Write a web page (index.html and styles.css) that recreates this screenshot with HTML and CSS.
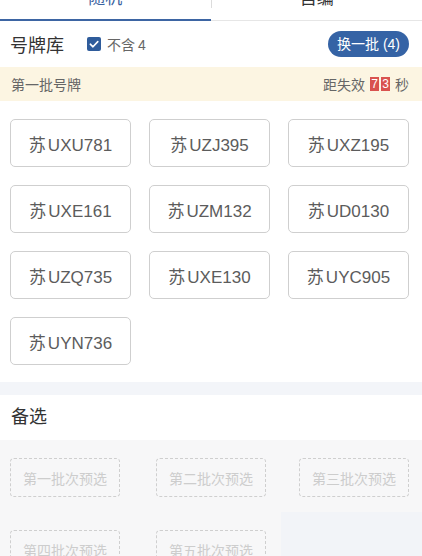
FILE: index.html
```html
<!DOCTYPE html>
<html lang="zh">
<head>
<meta charset="utf-8">
<link rel="stylesheet" href="styles.css">
</head>
<body>
<div class="page">
  <div class="tabs">
    <div class="tab active">随机</div>
    <div class="tab-sep"></div>
    <div class="tab">自编</div>
  </div>

  <div class="head">
    <div class="title">号牌库</div>
    <label class="check">
      <span class="box"><svg viewBox="0 0 14 14" width="14" height="14"><path d="M3.3 7.2 L6 9.8 L10.8 4.6" fill="none" stroke="#fff" stroke-width="1.6" stroke-linecap="round" stroke-linejoin="round"/></svg></span>
      <span class="check-text">不含<span class="num">4</span></span>
    </label>
    <div class="btn">换一批 (4)</div>
  </div>

  <div class="notice">
    <span>第一批号牌</span>
    <span class="timer">距失效<span class="digit">7</span><span class="digit">3</span>秒</span>
  </div>

  <div class="plates">
    <div class="plate"><span><span class="prov">苏</span>UXU781</span></div>
    <div class="plate"><span><span class="prov">苏</span>UZJ395</span></div>
    <div class="plate"><span><span class="prov">苏</span>UXZ195</span></div>
    <div class="plate"><span><span class="prov">苏</span>UXE161</span></div>
    <div class="plate"><span><span class="prov">苏</span>UZM132</span></div>
    <div class="plate"><span><span class="prov">苏</span>UD0130</span></div>
    <div class="plate"><span><span class="prov">苏</span>UZQ735</span></div>
    <div class="plate"><span><span class="prov">苏</span>UXE130</span></div>
    <div class="plate"><span><span class="prov">苏</span>UYC905</span></div>
    <div class="plate"><span><span class="prov">苏</span>UYN736</span></div>
  </div>

  <div class="gap-band"></div>

  <div class="sub-title">备选</div>

  <div class="slots">
    <div class="cell"><div class="slot">第一批次预选</div></div>
    <div class="cell"><div class="slot">第二批次预选</div></div>
    <div class="cell"><div class="slot">第三批次预选</div></div>
    <div class="cell"><div class="slot">第四批次预选</div></div>
    <div class="cell"><div class="slot">第五批次预选</div></div>
    <div class="cell empty"></div>
  </div>
</div>
</body>
</html>
```

FILE: styles.css
```css
* { box-sizing: border-box; }
html, body {
  margin: 0;
  padding: 0;
  background: #fff;
  overflow: hidden;
}
body {
  font-family: "Liberation Sans", "Noto Sans CJK SC", sans-serif;
  color: #333;
}
.page {
  width: 422px;
  height: 556px;
  overflow: hidden;
}

/* tabs */
.tabs {
  display: flex;
  margin-top: -19px;
  height: 40px;
}
.tab {
  flex: 1;
  height: 40px;
  line-height: 36px;
  text-align: center;
  font-size: 17px;
  color: #333;
  border-bottom: 1px solid #e6e6e6;
}
.tab.active {
  color: #3a62a0;
  border-bottom: 2px solid #3d65a3;
}
.tab-sep {
  width: 1px;
  height: 40px;
  border-bottom: 1px solid #e6e6e6;
  background: linear-gradient(#fff 0, #fff 10px, #dcdcdc 10px, #dcdcdc 27px, #fff 27px);
}

/* header */
.head {
  display: flex;
  align-items: center;
  height: 46px;
  padding: 0 13px 0 10px;
}
.title {
  font-size: 18px;
  color: #333;
}
.check {
  display: flex;
  align-items: center;
  margin-left: 23px;
}
.box {
  width: 14px;
  height: 14px;
  border-radius: 2px;
  background: #2f5c9b;
  display: flex;
}
.check-text {
  margin-left: 6px;
  font-size: 14px;
  color: #666;
}
.check-text .num { margin-left: 3px; }
.btn {
  margin-left: auto;
  height: 26px;
  line-height: 26px;
  padding: 0 9px;
  border-radius: 13px;
  background: #3563a5;
  color: #fff;
  font-size: 14px;
}

/* notice */
.notice {
  display: flex;
  justify-content: space-between;
  align-items: center;
  height: 34px;
  padding: 0 13px 0 11px;
  background: #fcf5e2;
  font-size: 14px;
  color: #666;
}
.timer {
  display: flex;
  align-items: center;
}
.digit {
  display: inline-block;
  width: 9px;
  height: 14px;
  line-height: 14px;
  text-align: center;
  background: #d9534f;
  color: #fff;
  font-size: 12px;
  margin-left: 2px;
}
.digit:first-of-type { margin-left: 5px; }
.digit:last-of-type { margin-right: 5px; }

/* plates */
.plates {
  display: grid;
  grid-template-columns: repeat(3, 121px);
  column-gap: 18px;
  row-gap: 18px;
  padding: 18px 13px 17px 10px;
}
.plate {
  height: 48px;
  border: 1px solid #cfcfcf;
  border-radius: 5px;
  display: flex;
  align-items: center;
  justify-content: center;
  font-size: 17px;
  color: #5c5c5c;
}
.prov { margin-right: 2px; }

.gap-band {
  height: 13px;
  background: #f3f5f9;
}

.sub-title {
  height: 45px;
  line-height: 45px;
  padding-left: 11px;
  font-size: 18px;
  color: #333;
}

/* slots */
.slots {
  display: grid;
  grid-template-columns: repeat(3, 1fr);
  grid-auto-rows: 72px;
  background: #f7f7f8;
}
.cell {
  padding-top: 18px;
  display: flex;
  justify-content: center;
}
.cell:nth-child(3n+1) { justify-content: flex-start; padding-left: 10px; }
.cell:nth-child(3n) { justify-content: flex-end; padding-right: 13px; }
.cell.empty { background: #f2f4f8; }
.slot {
  width: 110px;
  height: 39px;
  border: 1px dashed #cfcfcf;
  border-radius: 4px;
  display: flex;
  align-items: center;
  justify-content: center;
  font-size: 14px;
  color: #cdcdcd;
}
```
